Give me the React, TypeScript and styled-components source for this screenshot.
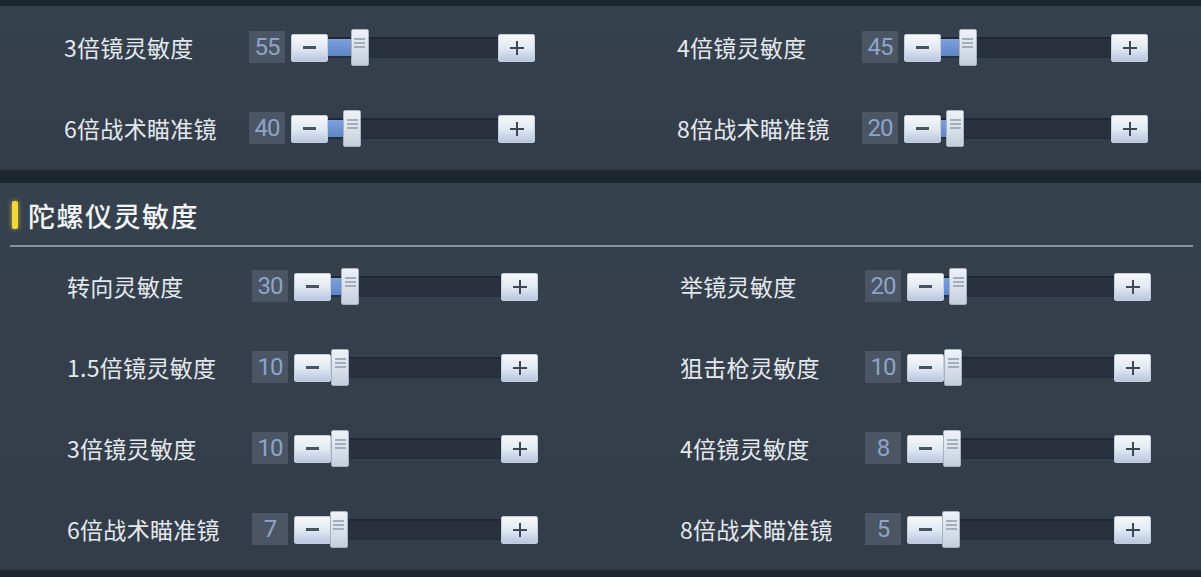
import React from "react";
import styled, { createGlobalStyle } from "styled-components";

const Global = createGlobalStyle`
  html, body { margin: 0; padding: 0; background: #1e252e; }
  body { font-family: "Noto Sans CJK SC", "Noto Sans", sans-serif; }
`;

const Page = styled.div`
  width: 1201px;
  height: 577px;
  box-sizing: border-box;
  padding-top: 6px;
  display: flex;
  flex-direction: column;
  gap: 13px;
  background: #1e252e;
  overflow: hidden;
`;

const Panel = styled.section<{ $h: number; $pad: number }>`
  height: ${(p) => p.$h}px;
  box-sizing: border-box;
  background: linear-gradient(180deg, #36414e 0%, #333d49 100%);
  padding-left: ${(p) => p.$pad}px;
  display: flex;
  flex-direction: column;
`;

const Header = styled.div`
  height: 62px;
  display: flex;
  align-items: center;
  gap: 10px;
  margin-left: -55px;
  padding-top: 2px;
  box-sizing: border-box;
`;

const Mark = styled.span`
  width: 6px;
  height: 28px;
  border-radius: 2px;
  background: #f3d63a;
  box-shadow: 0 0 5px rgba(245, 214, 58, 0.7);
`;

const Title = styled.h2`
  margin: 0;
  font-size: 27px;
  font-weight: 500;
  color: #f1f3f5;
  letter-spacing: 1.5px;
`;

const Divider = styled.hr`
  margin: 0 8px 0 -57px;
  border: none;
  height: 2px;
  background: #8a939d;
`;

const Grid = styled.div<{ $top: number }>`
  display: grid;
  grid-template-columns: 613px 1fr;
  grid-auto-rows: 74px;
  row-gap: 7px;
  padding-top: ${(p) => p.$top}px;
`;

const Row = styled.div`
  display: flex;
  align-items: center;
`;

const Label = styled.span`
  width: 185px;
  font-size: 23px;
  color: #e4e8ec;
  white-space: nowrap;
  letter-spacing: 0.3px;
`;

const Value = styled.span`
  width: 36px;
  height: 32px;
  background: #4b5563;
  color: #8da4ca;
  font-family: Roboto, "Liberation Sans", sans-serif;
  font-size: 24px;
  letter-spacing: -1px;
  display: flex;
  align-items: center;
  justify-content: center;
  margin-right: 6px;
`;

const Btn = styled.span`
  width: 37px;
  height: 28px;
  box-sizing: border-box;
  border: 1px solid #c3cedd;
  border-radius: 2px;
  background: linear-gradient(180deg, #f6f8fb 0%, #e2e9f2 50%, #b7c7df 100%);
  display: flex;
  align-items: center;
  justify-content: center;
  position: relative;
  z-index: 1;
  margin-top: 1px;
`;

const Minus = styled.span`
  width: 13px;
  height: 3px;
  background: #4a5361;
`;

const PlusIcon = () => (
  <svg width="16" height="16" viewBox="0 0 16 16">
    <path d="M8 1v14M1 8h14" stroke="#3e4754" strokeWidth="2" />
  </svg>
);

const Track = styled.div`
  width: 170px;
  height: 21px;
  box-sizing: border-box;
  background: #28313d;
  border-top: 2px solid #1f2834;
  border-bottom: 2px solid #232f40;
  position: relative;
`;

const Fill = styled.div`
  position: absolute;
  left: 0;
  top: 0;
  bottom: 0;
  background: linear-gradient(180deg, #7ea0dc 0%, #5f85c8 100%);
`;

const Thumb = styled.div`
  position: absolute;
  top: -10px;
  width: 18px;
  height: 37px;
  box-sizing: border-box;
  border: 1px solid #a7b2c0;
  border-radius: 2px;
  background: linear-gradient(180deg, #eef2f7 0%, #d6dee8 60%, #c4cfdc 100%);
  display: flex;
  flex-direction: column;
  align-items: center;
  gap: 2px;
  padding-top: 8px;
  z-index: 2;
`;

const Grip = styled.span`
  width: 11px;
  height: 2px;
  background: #a4aeba;
`;

type Item = { label: string; value: number };

const Setting = ({ label, value }: Item) => {
  const off = Math.max(-2, (value - 10) * 0.5);
  return (
    <Row>
      <Label>{label}</Label>
      <Value>{value}</Value>
      <Btn>
        <Minus />
      </Btn>
      <Track>
        <Fill style={{ width: Math.max(0, off + 9) }} />
        <Thumb style={{ left: off }}>
          <Grip />
          <Grip />
          <Grip />
        </Thumb>
      </Track>
      <Btn>
        <PlusIcon />
      </Btn>
    </Row>
  );
};

const scope: Item[] = [
  { label: "3倍镜灵敏度", value: 55 },
  { label: "4倍镜灵敏度", value: 45 },
  { label: "6倍战术瞄准镜", value: 40 },
  { label: "8倍战术瞄准镜", value: 20 },
];

const gyro: Item[] = [
  { label: "转向灵敏度", value: 30 },
  { label: "举镜灵敏度", value: 20 },
  { label: "1.5倍镜灵敏度", value: 10 },
  { label: "狙击枪灵敏度", value: 10 },
  { label: "3倍镜灵敏度", value: 10 },
  { label: "4倍镜灵敏度", value: 8 },
  { label: "6倍战术瞄准镜", value: 7 },
  { label: "8倍战术瞄准镜", value: 5 },
];

export default function App() {
  return (
    <>
      <Global />
      <Page>
        <Panel $h={164} $pad={64}>
          <Grid $top={4}>
            {scope.map((s, i) => (
              <Setting key={i} {...s} />
            ))}
          </Grid>
        </Panel>
        <Panel $h={387} $pad={67}>
          <Header>
            <Mark />
            <Title>陀螺仪灵敏度</Title>
          </Header>
          <Divider />
          <Grid $top={2}>
            {gyro.map((s, i) => (
              <Setting key={i} {...s} />
            ))}
          </Grid>
        </Panel>
      </Page>
    </>
  );
}
